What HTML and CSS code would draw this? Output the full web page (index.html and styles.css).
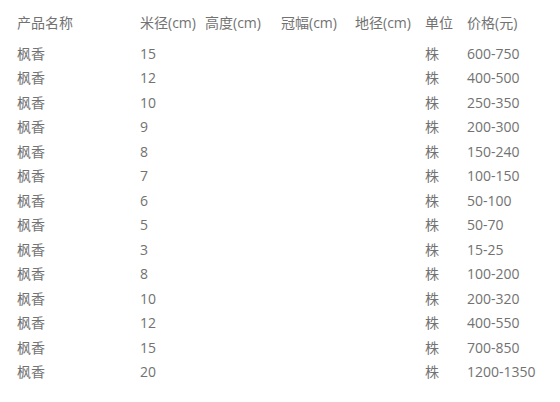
FILE: index.html
```html
<!DOCTYPE html>
<html lang="zh">
<head>
<meta charset="utf-8">
<link rel="stylesheet" href="styles.css">
</head>
<body>
<div class="table">
  <div class="row head"><span>产品名称</span><span>米径(cm)</span><span>高度(cm)</span><span>冠幅(cm)</span><span>地径(cm)</span><span>单位</span><span>价格(元)</span></div>
  <div class="row"><span>枫香</span><span>15</span><span></span><span></span><span></span><span>株</span><span>600-750</span></div>
  <div class="row"><span>枫香</span><span>12</span><span></span><span></span><span></span><span>株</span><span>400-500</span></div>
  <div class="row"><span>枫香</span><span>10</span><span></span><span></span><span></span><span>株</span><span>250-350</span></div>
  <div class="row"><span>枫香</span><span>9</span><span></span><span></span><span></span><span>株</span><span>200-300</span></div>
  <div class="row"><span>枫香</span><span>8</span><span></span><span></span><span></span><span>株</span><span>150-240</span></div>
  <div class="row"><span>枫香</span><span>7</span><span></span><span></span><span></span><span>株</span><span>100-150</span></div>
  <div class="row"><span>枫香</span><span>6</span><span></span><span></span><span></span><span>株</span><span>50-100</span></div>
  <div class="row"><span>枫香</span><span>5</span><span></span><span></span><span></span><span>株</span><span>50-70</span></div>
  <div class="row"><span>枫香</span><span>3</span><span></span><span></span><span></span><span>株</span><span>15-25</span></div>
  <div class="row"><span>枫香</span><span>8</span><span></span><span></span><span></span><span>株</span><span>100-200</span></div>
  <div class="row"><span>枫香</span><span>10</span><span></span><span></span><span></span><span>株</span><span>200-320</span></div>
  <div class="row"><span>枫香</span><span>12</span><span></span><span></span><span></span><span>株</span><span>400-550</span></div>
  <div class="row"><span>枫香</span><span>15</span><span></span><span></span><span></span><span>株</span><span>700-850</span></div>
  <div class="row"><span>枫香</span><span>20</span><span></span><span></span><span></span><span>株</span><span>1200-1350</span></div>
</div>
</body>
</html>
```

FILE: styles.css
```css
html, body {
  margin: 0;
  padding: 0;
  background: #fff;
}
body {
  font-family: "Open Sans", "Noto Sans CJK SC", sans-serif;
  font-size: 14px;
  color: #727272;
}
.table {
  padding: 11px 0 0 17px;
}
.row {
  display: grid;
  grid-template-columns: 123px 65px 76px 74px 70px 42px 1fr;
  height: 24.5px;
  line-height: 24.5px;
  white-space: nowrap;
}
.row.head {
  margin-bottom: 6px;
}
```
